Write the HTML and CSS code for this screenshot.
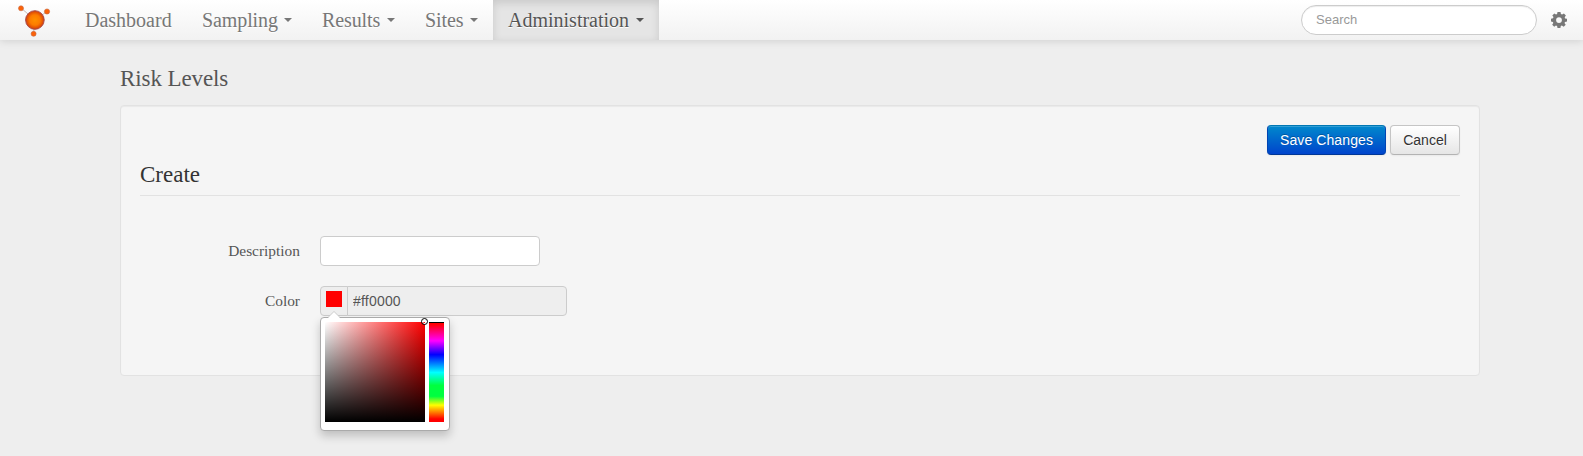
FILE: index.html
```html
<!DOCTYPE html>
<html lang="en">
<head>
<meta charset="utf-8">
<title>Risk Levels</title>
<link rel="stylesheet" href="styles.css">
</head>
<body>
<nav class="navbar">
  <a class="brand">
    <svg width="36" height="36" viewBox="0 0 36 36">
      <defs><radialGradient id="core"><stop offset="0" stop-color="#ff9000"/><stop offset=".55" stop-color="#fd7c00"/><stop offset="1" stop-color="#d43d08"/></radialGradient></defs>
      <path d="M5 6L19 18L31 9.500M19 18L17.500 32" stroke="#c4bdb9" fill="none"/>
      <circle cx="18.900" cy="18" r="9.300" fill="url(#core)" stroke="#a94c4c" stroke-width="1"/>
      <g fill="#fb6209" stroke="#c56c48" stroke-width=".6"><circle cx="5" cy="6.300" r="2.500"/><circle cx="31" cy="9.500" r="2.600"/><circle cx="17.600" cy="31.800" r="2.500"/></g>
    </svg>
  </a>
  <ul class="menu">
    <li class="item dashboard"><span>Dashboard</span></li>
    <li class="item sampling"><span>Sampling</span><i class="caret"></i></li>
    <li class="item results"><span>Results</span><i class="caret"></i></li>
    <li class="item sites"><span>Sites</span><i class="caret"></i></li>
    <li class="item administration active"><span>Administration</span><i class="caret"></i></li>
  </ul>
  <input class="search" type="text" placeholder="Search">
  <svg class="gear" width="16" height="16" viewBox="0 0 16 16"><path fill="#777" fill-rule="evenodd" d="M6.500 0h3l.4 2.100 1.200.5L12.900 1.400l2 2-1.200 1.800.4 1.200 1.900.4v2.700l-2 .4-.5 1.200 1.200 1.700-2 2-1.800-1.200-1.100.5-.4 1.900h-2.900l-.4-2-1.200-.4-1.700 1.200-2-2 1.100-1.800-.4-1.100L0 9.500V6.700l2-.4.5-1.200L1.300 3.400l2-2L5 2.600l1.100-.5zM8 5.200a2.900 2.900 0 1 0 0 5.800 2.900 2.900 0 0 0 0-5.800z"/></svg>
</nav>
<main class="container">
  <h1 class="title">Risk Levels</h1>
  <section class="well">
    <div class="actions"><button class="btn primary">Save Changes</button><button class="btn">Cancel</button></div>
    <h2 class="legend">Create</h2>
    <form class="form">
      <div class="row"><label class="label">Description</label><input class="field" type="text"></div>
      <div class="row">
        <label class="label">Color</label>
        <div class="color-input">
          <span class="addon"><i class="swatch"></i></span>
          <input class="field value" type="text" value="#ff0000" readonly>
          <div class="picker">
            <i class="arrow"></i>
            <div class="saturation"><i class="ring"></i></div>
            <div class="hue"></div>
          </div>
        </div>
      </div>
    </form>
  </section>
</main>
</body>
</html>
```
FILE: styles.css
```css
* { box-sizing: border-box; }
body {
  margin: 0;
  height: 456px;
  overflow: hidden;
  background: #eee;
  color: #555;
  font-family: Georgia, "Liberation Serif", serif;
}
i { display: block; }
.navbar {
  display: flex;
  align-items: center;
  height: 40px;
  padding-right: 16px;
  background: linear-gradient(#fff, #f2f2f2);
  box-shadow: 0 1px 8px rgba(0, 0, 0, .13);
}
.brand { width: 70px; height: 36px; padding-left: 16px; }
.brand svg { display: block; }
.menu { display: flex; margin: 0; padding: 0; list-style: none; }
.item {
  display: flex;
  align-items: center;
  justify-content: space-between;
  height: 40px;
  padding: 0 15px;
  color: #777;
  font-size: 20px;
  line-height: 40px;
  text-shadow: 0 1px 0 #fff;
}
.dashboard { width: 117px; }
.sampling { width: 120px; letter-spacing: -.1px; }
.results { width: 103px; letter-spacing: -.1px; }
.sites { width: 83px; letter-spacing: -.1px; }
.administration { width: 166px; }
.active {
  background: #e5e5e5;
  color: #555;
  box-shadow: inset 0 3px 8px rgba(0, 0, 0, .125);
}
.caret {
  border: 4px solid transparent;
  border-top-color: currentColor;
  border-bottom: 0;
}
.search {
  width: 236px;
  height: 30px;
  margin-left: auto;
  padding: 0 14px 1px;
  border: 1px solid #ccc;
  border-radius: 15px;
  background: #fff;
  box-shadow: inset 0 1px 1px rgba(0, 0, 0, .075);
  font: 13px "Liberation Sans", Arial, sans-serif;
}
.search::placeholder { color: #999; opacity: 1; }
.gear { margin-left: 14px; }
.container { width: 1360px; margin-left: 120px; }
.title {
  height: 65px;
  margin: 0;
  padding: 26px 0 0;
  font-size: 23px;
  font-weight: normal;
  line-height: 26px;
  letter-spacing: -.1px;
}
.well {
  height: 271px;
  padding: 19px;
  border: 1px solid #e2e2e2;
  border-radius: 4px;
  background: #f5f5f5;
  box-shadow: inset 0 1px 1px rgba(0, 0, 0, .05);
}
.actions { display: flex; justify-content: flex-end; gap: 4px; }
.btn {
  width: 70px;
  height: 30px;
  padding: 0;
  border: 1px solid #c5c5c5;
  border-bottom-color: #b3b3b3;
  border-radius: 4px;
  background: linear-gradient(#fff, #e6e6e6);
  box-shadow: inset 0 1px 0 rgba(255, 255, 255, .2), 0 1px 2px rgba(0, 0, 0, .05);
  color: #333;
  font: 14px "Liberation Sans", Arial, sans-serif;
  text-shadow: 0 1px 1px rgba(255, 255, 255, .75);
}
.primary {
  width: 119px;
  border-color: #0077b3 #0044b3 #003796;
  background: linear-gradient(#08c, #04c);
  color: #fff;
  letter-spacing: .1px;
  text-shadow: 0 -1px 0 rgba(0, 0, 0, .25);
}
.legend {
  height: 41px;
  margin: 0;
  border-bottom: 1px solid #e2e2e2;
  color: #333;
  font-size: 23px;
  font-weight: normal;
  line-height: 39px;
}
.form { padding-top: 40px; }
.row { display: flex; gap: 20px; margin-bottom: 20px; }
.label {
  width: 160px;
  font-size: 15.400px;
  line-height: 30px;
  text-align: right;
}
.field {
  width: 220px;
  height: 30px;
  padding: 0 6px;
  border: 1px solid #ccc;
  border-radius: 4px;
  background: #fff;
  color: #555;
  font: 14px "Liberation Sans", Arial, sans-serif;
}
.color-input { position: relative; display: flex; }
.addon {
  width: 28px;
  height: 30px;
  padding: 4px 5px;
  border: 1px solid #ccc;
  border-radius: 4px 0 0 4px;
  background: #eee;
}
.swatch { width: 16px; height: 16px; background: #f00; }
.value {
  margin-left: -1px;
  padding-left: 5px;
  border-radius: 0 4px 4px 0;
  background: #eee;
  letter-spacing: .2px;
}
.picker {
  position: absolute;
  top: 31px;
  left: 0;
  display: flex;
  gap: 4px;
  width: 130px;
  height: 114px;
  padding: 4px;
  border: 1px solid #aaa;
  border-radius: 4px;
  background: #fff;
  box-shadow: 0 5px 10px rgba(0, 0, 0, .2);
}
.arrow {
  position: absolute;
  top: -6px;
  left: 7px;
  border: 6px solid transparent;
  border-top: 0;
  border-bottom-color: #fff;
  filter: drop-shadow(0 -1px 0 #ccc);
}
.saturation {
  position: relative;
  width: 100px;
  height: 100px;
  background: linear-gradient(transparent, #000), linear-gradient(90deg, #fff, #f00);
}
.ring {
  position: absolute;
  top: -4px;
  right: -3px;
  width: 7px;
  height: 7px;
  border: 1px solid #000;
  border-radius: 50%;
  box-shadow: inset 0 0 0 1px #fff;
}
.hue {
  width: 15px;
  height: 100px;
  border-top: 1px solid #000;
  background: linear-gradient(#f00 1%, #f0f 18%, #00f 32%, #0ff 50%, #00ff40 63%, #00ff40 74%, #ff0 83%, #f00 97%);
}
```
